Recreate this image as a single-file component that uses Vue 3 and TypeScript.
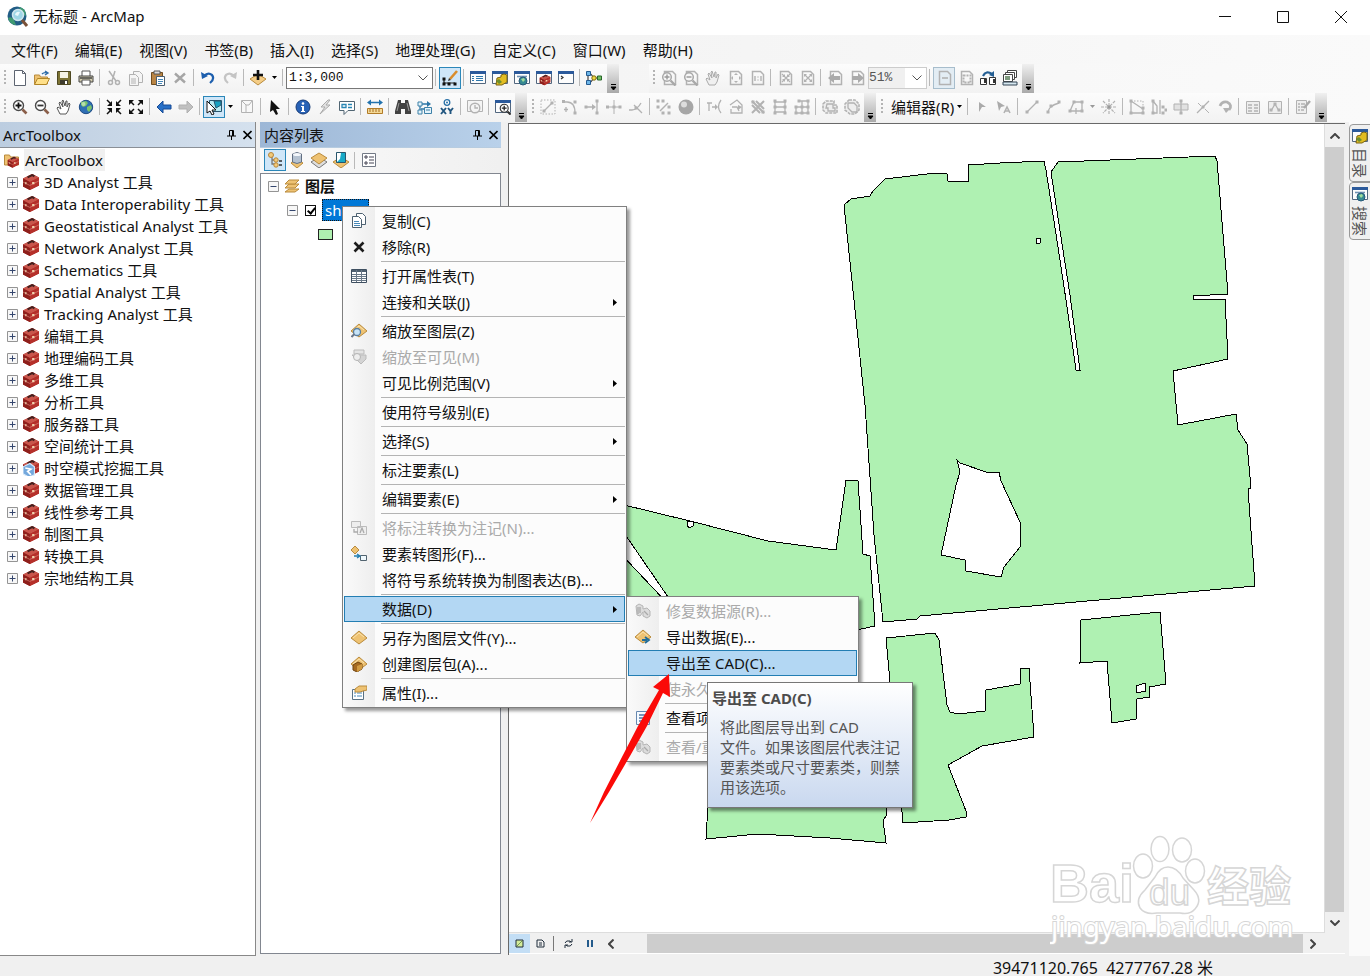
<script setup lang="ts">
import { ref } from 'vue'

interface Tool { i?: string; t?: string; on?: boolean; drop?: boolean; pale?: boolean; combo?: string; label?: string; wide?: boolean }
interface MenuItem { text?: string; icon?: string; sub?: boolean; off?: boolean; hot?: boolean }

const g = '#b2b2b2'
const line = (d: string, c: string = g, w: number = 1.3) => `<path d="${d}" fill="none" stroke="${c}" stroke-width="${w}"/>`
const fill = (d: string, c: string = g, s: string = 'none') => `<path d="${d}" fill="${c}" stroke="${s}"/>`
const nodes = (pts: number[][], c: string = g) => pts.map(p => `<rect x="${p[0] - 1.5}" y="${p[1] - 1.5}" width="3" height="3" fill="${c}"/>`).join('')
const page = line('M3.5 1.5h8l3 3v10h-11z', g, 1.5)
const glass = (c: string, h: string) => `<circle cx="6.5" cy="6.5" r="5" fill="#fff" stroke="${c}" stroke-width="1.4"/>` + line('M10.5 10.5l4 4', h, 2.6)
const pageGlass = page + '<circle cx="6" cy="7" r="4.3" fill="#f6f6f6" stroke="#a8a8a8" stroke-width="1.5"/>' + line('M9.500 10.500l5 5', '#a8a8a8', 2.4)
const windowBox = fill('M.5 1.5h15v12h-15z', '#fdfdfd', '#52677f') + fill('M0 1h16v3H0z', '#2c5a9b')
const gold = (d: string) => fill(d, '#eec272', '#b98b3d')
const diamond = gold('M8 1l8 7-8 6-8-6z') + line('M2 8l6-5 5 4', '#fbe3ae', 1)
const redBox = fill('M1 5l8-4 6 3v7l-8 4-6-3z', '#a8261f') + fill('M1 5l8-4 6 3-8 4z', '#c9554b') + fill('M7 8l8-4v7l-8 4z', '#b5302a') + fill('M1 5l6 3v7l-6-3z', '#8e1f1b') + line('M1 8l6 3 8-4', '#d98579', .6) + line('M5 4l4-2 2 1', '#42201e', 1.8) + fill('M3 8h1v2H3zM9 8h2v2H9z', '#f3d4b0')
const globe = '<circle cx="8" cy="8" r="6.7" fill="#2f6fb4" stroke="#1f4c85"/>' + fill('M3 3l5-1 2 2-2 3-3 1-2-2zM9 8l4-2 1 3-3 4-2-2z', '#7cc36c') + '<circle cx="5.5" cy="5" r="2" fill="#fff" opacity=".45"/>'

const icons: Record<string, string> = {
  new: fill('M2.5.5h8l3 3v12h-11z', '#fff', '#5d6470') + line('M10.5.5v3h3', '#5d6470', 1),
  open: gold('M.5 14V5h5l1 2h7v7z') + fill('M.5 14.500l3-6h12l-3 6z', '#ffe08a', '#b08425') + line('M8 4q2-2 5-1M11 1l3 2-3 2', '#2e6ca8', 1.4),
  save: fill('M1.500 1.500h13v13h-13z', '#7c7334', '#4e4822') + fill('M4 2h8v6H4z', '#f5f3e4') + fill('M4 10h8v4H4z', '#3e3b2d') + fill('M9 11h2v3H9z', '#fff'),
  print: fill('M4 1h8v6H4z', '#fff', '#555') + fill('M1 6h14v6H1z', '#d3cdb0', '#444') + fill('M4 10h8v5H4z', '#fff', '#555') + line('M2 8h12', '#444', 1.5),
  cut: line('M3 1l7 10M9 1L6 11', g, 1.5) + `<circle cx="4.500" cy="12.500" r="2" fill="none" stroke="${g}" stroke-width="1.500"/><circle cx="11.500" cy="12.500" r="2" fill="none" stroke="${g}" stroke-width="1.500"/>`,
  copyOff: fill('M5.500 1.500h6l3 3v8h-9z', '#f5f5f5', g) + fill('M1.500 4.500h6l3 3v8h-9z', '#f5f5f5', g) + line('M3 9h5M3 11h5M3 13h5', g, 1),
  copy: fill('M5.500 .5h6l3 3v8h-9z', '#fff', '#4c6070') + fill('M1.500 3.500h6l3 3v8h-9z', '#fff', '#4c6070') + line('M3 8.500h5M3 10.500h6M3 12.500h6', '#4788b8', 1),
  paste: fill('M1.500 2.500h11v12h-11z', '#b98545', '#6f4d20') + fill('M4 1h6v3H4z', '#ddd', '#555') + fill('M6.500 6.500h8v9h-8z', '#fff', '#4b5f70') + line('M8 9.500h5M8 11.500h5M8 13.500h4', '#4788b8', 1),
  delOff: line('M3 3.500l10 9M13 3.500l-10 9', '#a6a6a6', 2.4),
  del: line('M3.500 3.500l9 9M12.500 3.500l-9 9', '#1c1c1c', 2.6),
  undo: line('M4 6q4-4 8-1 3 4-2 8', '#1d5fae', 2.2) + fill('M1 2l1 7 6-3z', '#1d5fae'),
  redo: line('M12 6q-4-4-8-1-3 4 2 8', '#c4c4c4', 2.2) + fill('M15 2l-1 7-6-3z', '#c4c4c4'),
  addData: fill('M8 4l8 5-8 6-8-6z', '#f4cd87', '#b98b3d') + line('M8 0v10M3 5h10', '#111', 2.6),
  editor: line('M2 9v4h11', '#222', 1.2) + nodes([[2, 14], [7, 14], [13, 14], [2, 9]], '#111') + line('M8 9l7-8', '#d98c2b', 2.6) + fill('M6 11l3-1-2-2z', '#333'),
  toc: windowBox + line('M2 6.500h2M6 6.500h7M2 8.500h2M6 8.500h7M2 10.500h2M6 10.500h7', '#2f78ad', 1),
  catalog: windowBox + fill('M5 8l4-1V5l3-1 3 1v7l-5 3-6 0z', '#e2bd22', '#7a6413') + fill('M4 11l3-2 3 3-3 2z', '#6f8f2d'),
  search: windowBox + line('M3 6.500h10', '#6f91b2', 1.6) + '<circle cx="9" cy="11" r="4" fill="#368a92" stroke="#28597a"/><path d="M7 9l3-1 1 2-2 2z" fill="#a0dd9c"/>',
  toolbox: windowBox + '<g transform="translate(3 4) scale(.75)">' + redBox + '</g>',
  python: windowBox + line('M3 6l2 1.500-2 1.500', '#333', 1.2),
  model: line('M4 3l4 5h5M4 13l4-5M2 3v10', '#333', 1.1) + fill('M.5 1.500h4v4h-4zM.5 10.500h4v4h-4z', '#6db6e9', '#245b91') + '<circle cx="8" cy="8" r="2.200" fill="#f0d53f" stroke="#7c6d13"/>' + fill('M11.500 6h4v4h-4z', '#72bd63', '#28672a'),
  pin: pageGlass + line('M3.500 7h5M6 4.500v5', '#999', 1.4), pout: pageGlass + line('M3.500 7h5', '#999', 1.4),
  zin: glass('#4a4a4a', '#8a5e49') + line('M3.500 6.500h6M6.500 3.500v6', '#111', 1.8), zout: glass('#4a4a4a', '#8a5e49') + line('M3.500 6.500h6', '#333', 1.8),
  hand: fill('M4 15l-3-6 1-1 3 2-2-6 1-1 3 5-1-6 1-1 2 6 1-5 1 0v6l2-4 1 1-2 7-2 3z', '#fff', '#565656'),
  handOff: fill('M4 15l-3-6 1-1 3 2-2-6 1-1 3 5-1-6 1-1 2 6 1-5 1 0v6l2-4 1 1-2 7-2 3z', '#f0f0f0', '#aaa'),
  globe,
  fixedIn: line('M1 1l4 4M15 1l-4 4M1 15l4-4M15 15l-4-4', '#111', 1.5) + fill('M6 2v5H1zM10 2v5h5zM6 14V9H1zM10 14V9h5z', '#111'),
  fixedOut: line('M2 2l4 4M14 2l-4 4M2 14l4-4M14 14l-4-4', '#111', 1.5) + fill('M1 6V1h5zM15 6V1h-5zM1 10v5h5zM15 10v5h-5z', '#111'),
  pageIn: page + line('M5 4l8 8M13 4l-8 8', g, 1.2) + fill('M8 4v3H5zM10 4v3h3zM8 12V9H5zM10 12V9h3z'),
  pageOut: page + line('M6 5l6 6M12 5l-6 6', g, 1.2) + fill('M5 7V4h3zM13 7V4h-3zM5 9v3h3zM13 9v3h-3z'),
  whole: page + fill('M9 3l2 2H7zM9 13l2-2H7zM4 8l2-2v4zM14 8l-2-2v4z'),
  one: page + line('M6 6v5M12 6v5M9 6.500v1M9 9.500v1', g, 1.4),
  left: fill('M1 8l6-6v4h8v4H7v4z', '#2870c7', '#174b96'), right: fill('M15 8L9 2v4H1v4h8v4z', '#c0c0c0', '#b0b0b0'),
  pageLeft: page + fill('M1 8l6-5v3h6v4H7v3z', '#aaa'), pageRight: page + fill('M15 8L9 3v3H3v4h6v3z', '#aaa'),
  selFeat: fill('M3.500 1.500h12v11h-12z', '#b9eaf2', '#29566f') + fill('M8 2h7v4l-5 3z', '#18a2c1', '#29566f') + fill('M1 2l9 9H6l2 4-2 1-2-4-3 2z', '#fff', '#111'),
  clear: fill('M2.500 1.500h11v12h-11z', '#f8f8f8', g) + line('M3 2l4 4h3l3-4M7 6v7', g, 1),
  pointer: fill('M4 1l9 9H9l2 5-2 1-3-5-3 2z', '#111'),
  info: '<circle cx="8" cy="8" r="7" fill="#2862b6" stroke="#173c78"/><circle cx="8" cy="4.500" r="1.300" fill="#fff"/>' + fill('M6 7h3v5h1v1H6v-1h1V8H6z', '#fff'),
  bolt: fill('M11 1L4 8h4l-5 7 10-9H9l4-5z', '#e3e3e3', '#aaa'),
  html: fill('M.5 2.500h15v9H9l-4 4v-4H.5z', '#fff', '#506573') + line('M3 5.500h4v3H3zM9 5.500h4M9 8.500h4', '#2886b4', 1.3),
  measure: line('M2 3.500h12', '#2272ad', 1.5) + fill('M0 3.500l4-3v6zM16 3.500l-4-3v6z', '#2272ad') + fill('M.5 9.500h15v5H.5z', '#f4d997', '#b17b28') + line('M3 10v3M6 10v3M9 10v3M12 10v3', '#a46c20', 1),
  find: fill('M3 1h3v3h4V1h3l3 11v3h-6v-5H6v5H0v-3z', '#414141') + line('M4 4L2 12M12 4l2 8', '#999', 1),
  route: line('M3 13V5h8M4 10h3', '#2b75a6', 1.3) + fill('M10 2l4 3-4 3z', '#2b75a6') + fill('M1 3h4v4H1zM1 11h4v4H1zM7.500 8.500h7v6h-7z', '#e4f3fb', '#3d81a8') + line('M9 11h4', '#3d81a8', 1),
  xy: '<circle cx="8" cy="3.500" r="2.800" fill="#fff" stroke="#2870a6" stroke-width="1.300"/><circle cx="8" cy="3.500" r="1" fill="#2870a6"/>' + line('M2 9l5 6M7 9l-5 6M9 9l2.500 3L14 9M11.500 12v3', '#20557f', 1.9),
  time: fill('M.5 1.500h15v11H.5z', '#f4f4f4', g) + '<circle cx="8" cy="9" r="4.800" fill="#f4f4f4" stroke="#b2b2b2" stroke-width="1.400"/>' + line('M8 6v3h3'),
  viewer: windowBox + '<g transform="translate(4 4) scale(.8)">' + glass('#333', '#333') + line('M3.500 6.500h6M6.500 3.500v6', '#222', 1.6) + '</g>',
  draft: page + line('M6 8h6', g, 1.6), focus: page + `<rect x="5.500" y="5.500" width="7" height="7" fill="none" stroke="${g}" stroke-dasharray="2 1" stroke-width="2"/>`,
  swap: line('M3 6q3-6 9-2', '#245f94', 2.2) + fill('M14 7l0-6-5 4z', '#245f94') + fill('M.5 8.500h6v6h-6zM9.500 7.500h6v7h-6z', '#fff', '#333') + fill('M4 9h2v4H4zM13 9h2v4h-2z', '#333'),
  ddp: fill('M5.500 .5h9v7h-9z', '#fff', '#444') + fill('M3.500 2.500h9v7h-9z', '#fff', '#444') + fill('M1.500 4.500h9v7h-9z', '#fff', '#444') + line('M3 7h5M3 9h5', '#557b55') + fill('M1 12h14v3H1z', '#d6e7ef', '#345'),
  e1: `<rect x="1" y="1" width="14" height="14" fill="none" stroke="${g}" stroke-dasharray="1.500 1.500"/>` + line('M4 12l8-8') + nodes([[4, 12], [12, 4]]),
  e2: line('M1 3h4q8 0 8 11M4 8v5M2 10.500h4') + nodes([[1.500, 2.500], [13, 3], [13, 14]]), e3: line('M1 8h8M13 2v12') + fill('M8 5l4 3-4 3z') + nodes([[2, 8], [13, 2], [13, 14]]),
  e4: line('M1 8h14M8 1v14', g, 1) + nodes([[1.500, 8], [8, 8], [14, 8]]), e5: line('M1 11h3q5 0 9-7M6 6l8 8') + nodes([[8, 9]]),
  e6: line('M4 12l8-8', g, 1.4) + nodes([[2, 2], [7, 2], [2, 8], [13, 8], [7, 14], [13, 14]]),
  ball: '<circle cx="8" cy="8" r="7.500" fill="#a6a6a6"/><circle cx="6" cy="5.500" r="3" fill="#ddd"/>',
  e7: line('M1 4h5M3 4v8M6 8h5M15 1q-5 7 0 13') + fill('M9 5l3 3-3 3z'), e8: line('M2 6l7-5 5 5v8H3v-4M4 8h5l2 4') + fill('M10 6l4 2-4 3z'),
  e9: line('M2 2l12 12M14 2L2 14M2 6l8 8M6 2l8 8', g, 2) + nodes([[3, 3], [13, 13]]), e10: line('M2 3h12M2 8h12M2 13h12M3 2v12M13 2v12') + nodes([[3, 2], [13, 2], [3, 8], [13, 8], [3, 14], [13, 14]]),
  e11: line('M5 2h9v12H2V8h12M8 2v12') + nodes([[5, 2], [14, 2], [2, 8], [8, 8], [14, 8], [2, 14], [8, 14], [14, 14]]),
  u1: `<path d="M1 5l3-3h8v4h3v8H4l-3-3z" fill="#eee" stroke="${g}" stroke-width="1.600" stroke-dasharray="3 1"/>` + line('M5 5h6v4h2v3H6V9H4z'), u2: `<path d="M5 1h6l4 4v6l-4 4H6l-5-4V5z" fill="#eee" stroke="${g}" stroke-width="1.600" stroke-dasharray="3 1"/>` + line('M4 4h6l3 3v6H8L4 9z'),
  edit: fill('M5 3l7 5-4 0-3 5z', '#aaa'), editA: fill('M1 2l8 5-4 1-2 4z', '#aaa') + line('M8 14l3-6 3 6M9 12h4', g, 1.6),
  s1: line('M3 13L13 3') + nodes([[3, 13], [13, 3]]), s2: line('M2 14q0-7 11-10') + nodes([[2, 13], [5, 7], [13, 3]]), s3: line('M2 12l4-9h8v9h-3M2 12h3M8 9v6M5 12h6') + nodes([[6, 3], [14, 3], [14, 12], [2, 12]]),
  s4: `<path d="M8 0v16M0 8h16M2 2l12 12M14 2L2 14" fill="none" stroke="${g}" stroke-width="1.200" stroke-dasharray="3 1"/>` + nodes([[8, 8]], '#999'),
  s5: line('M2 2v12h12v-4L2 2') + nodes([[2, 2], [2, 14], [14, 14], [14, 9]]) + `<path d="M5 2h9v5" fill="none" stroke="${g}" stroke-dasharray="1.500 1.500"/>`, s6: line('M2 2v12h4V7L2 2M9 1v14') + nodes([[2, 2], [2, 14], [12, 8], [12, 14], [15, 11]]),
  s7: fill('M1 5h14v6H1z', '#e1e1e1', g) + line('M8 1v14') + nodes([[8, 2], [8, 14]]), s8: line('M2 14L14 2') + line('M3 4l3 3M10 10l4 4', g, 1) + nodes([[8, 8]]),
  s9: line('M3 7q2-5 7-4 6 3 2 8', g, 2.8) + fill('M6 9h8l-5 5z'), attr: fill('M1.500 2.500h13v12h-13z', '#eee', g) + line('M3 6h4M9 6h4M3 9h4M9 9h4M3 12h4M9 12h4'), sketch: fill('M1.500 2.500h13v12h-13z', '#eee', g) + line('M4 12l4-7 4 7') + nodes([[4, 11], [8, 5], [12, 11]]),
  create: fill('M1.500 1.500h10v13h-10z', '#eee', g) + line('M3 5h2M6 5h4M3 8h2M6 8h3M3 11h2M6 11h3') + line('M9 9l6-7', '#aaa', 2.4),
  box: redBox,
  boxBlue: redBox + fill('M1 7l6-3 4 3v7l-5 2-5-3z', '#74a8dc', '#d7e9fa') + line('M3 8l5 1-3 2 3 3', '#fff', 1.4),
  boxFolder: gold('M.5 13V3h5l1 2h8v8z') + '<g transform="translate(3 4) scale(.78)">' + redBox + '</g>',
  layers: gold('M1 14l4-3h10l-4 3H1z') + gold('M1 10l4-4h10l-4 4H1z') + gold('M1 6l4-4h10l-4 4H1z'),
  list1: line('M5 4v8h5M5 8h4', '#777') + '<circle cx="4" cy="3" r="2.500" fill="#f2ca7a" stroke="#b8863b"/><circle cx="9" cy="8" r="2.200" fill="#f2ca7a" stroke="#b8863b"/><circle cx="9" cy="13" r="2.200" fill="#f2ca7a" stroke="#b8863b"/>' + line('M12 9h3M12 13h3', '#333'),
  list2: gold('M8 7l6 4-6 5-6-5z') + fill('M3.500 2v8q4.500 3 9 0V2q-4.500-3-9 0z', '#b5c2d1', '#626f82') + '<ellipse cx="8" cy="2.500" rx="4" ry="1.500" fill="#f4f7fb"/>',
  list3: fill('M0 10l8-5 8 5-8 6z', '#ddd', '#777') + gold('M0 6l8-5 8 5-8 6z'), list4: gold('M0 10l8-5 8 5-8 6z') + fill('M3.500 .5h9v10h-9z', '#17a9c7', '#28566d') + fill('M4 1h4L7 7l-3 3z', '#fff'),
  opts: fill('M1.500 1.500h13v13h-13z', '#fff', '#727985') + line('M4 4h2v2H4zM4 10h2v2H4zM8 5h5M8 8h5M8 11h5', '#445', 1),
  table: fill('M.5 1.500h15v13h-15z', '#fff', '#3e4f60') + line('M1 3h14', '#4f6070', 2) + line('M1 6.500h14M1 8.500h14M1 10.500h14M1 12.500h14M5.500 2v12M10.500 2v12', '#6a7988', 1),
  zlayer: diamond + '<circle cx="6" cy="9" r="3.500" fill="#c8e4f7" stroke="#587ea0" stroke-width="1.300"/>' + line('M3.500 11l-3 3', '#6c788a', 2),
  zvis: fill('M3 1h10v4H3z', '#e4e4e4', '#bbb') + fill('M1 6h14v4l-5 5-3-3z', '#d4d4d4', '#bbb') + '<circle cx="6" cy="8" r="3.500" fill="#eee" stroke="#b4b4b4"/>',
  label: fill('M.5 1.500h9v6h-9zM6.500 6.500h9v8h-9z', '#eee', '#bbb') + line('M3 9v3h4M9 13l2-5 2 5', '#aaa'),
  graphic: gold('M4 0l4 4-4 4-4-4z') + fill('M9.500 9.500h6v5h-6z', '#eef8fd', '#51636f') + line('M3 10h5M6 8l3 2-3 2', '#2580b2'),
  diamond,
  pack: diamond + fill('M2 9l5-3 4 2v5l-5 3-4-2z', '#a66a20', '#704511') + fill('M6 10l5-2v5l-5 3z', '#d29b42'),
  props: fill('M1.500 4.500h11v10h-11z', '#fff', '#587184') + line('M3 8h2M6 8h5M3 11h2M6 11h5', '#4788b8', 1) + gold('M4 4l4-3h8v4l-4 1-3 1H4z'),
  repair: fill('M1 3l3-2 4 2v3l4-1 3 3v5l-3 2-4-2V9L5 13 2 12z', '#dcdcdc', '#b5b5b5') + line('M3 4v7M5 4v6M9 8l4 4', '#aaa'),
  export: diamond + line('M7 11h5M10 8l4 3-4 3', '#216c98', 1.8),
  item: fill('M1.500 1.500h13v13h-13z', '#f5faff', '#6688b0') + line('M4 5h8M4 8h8M4 11h5', '#4f76a5'),
}

const sep: Tool = {}
const row1a: Tool[] = [{ i: 'new', t: '新建' }, { i: 'open', t: '打开' }, { i: 'save', t: '保存' }, { i: 'print', t: '打印' }, sep, { i: 'cut', t: '剪切' }, { i: 'copyOff', t: '复制' }, { i: 'paste', t: '粘贴' }, { i: 'delOff', t: '删除' }, sep, { i: 'undo', t: '撤消' }, { i: 'redo', t: '恢复' }, sep, { i: 'addData', t: '添加数据', drop: true }, sep, { combo: '1:3,000', t: '地图比例', wide: true }, sep, { i: 'editor', t: '编辑器工具条', on: true }, sep, { i: 'toc', t: '内容列表' }, { i: 'catalog', t: '目录' }, { i: 'search', t: '搜索' }, { i: 'toolbox', t: 'ArcToolbox' }, { i: 'python', t: 'Python' }, sep, { i: 'model', t: '模型构建器' }]
const row1b: Tool[] = [{ i: 'pin', t: '放大' }, { i: 'pout', t: '缩小' }, { i: 'handOff', t: '平移' }, { i: 'whole', t: '缩放整个页面' }, { i: 'one', t: '缩放至100%' }, sep, { i: 'pageIn', t: '固定比例放大' }, { i: 'pageOut', t: '固定比例缩小' }, sep, { i: 'pageLeft', t: '返回' }, { i: 'pageRight', t: '前进' }, { combo: '51%', t: '页面比例' }, sep, { i: 'draft', t: '草图模式', on: true, pale: true }, { i: 'focus', t: '聚焦数据框' }, { i: 'swap', t: '更改布局' }, { i: 'ddp', t: '数据驱动页面' }]
const row2a: Tool[] = [{ i: 'zin', t: '放大' }, { i: 'zout', t: '缩小' }, { i: 'hand', t: '平移' }, { i: 'globe', t: '全图' }, sep, { i: 'fixedIn', t: '固定比例放大' }, { i: 'fixedOut', t: '固定比例缩小' }, sep, { i: 'left', t: '返回' }, { i: 'right', t: '前进' }, sep, { i: 'selFeat', t: '选择要素', on: true, drop: true }, { i: 'clear', t: '清除' }, sep, { i: 'pointer', t: '选择元素' }, sep, { i: 'info', t: '识别' }, { i: 'bolt', t: '超链接' }, { i: 'html', t: 'HTML' }, sep, { i: 'measure', t: '测量' }, sep, { i: 'find', t: '查找' }, { i: 'route', t: '查找路径' }, { i: 'xy', t: '转到XY' }, sep, { i: 'time', t: '时间' }, sep, { i: 'viewer', t: '查看器' }]
const mk = (s: string): Tool[] => s.split(' ').map(n => (n === '|' ? sep : { i: n, t: n }))
const row2b = mk('e1 e2 e3 e4 e5 | e6 ball | e7 e8 e9 e10 e11 | u1 u2')
const row2c: Tool[] = [{ label: '编辑器(R)', t: '编辑器' }, sep, ...mk('edit editA | s1 s2'), { i: 's3', t: '构造', drop: true, pale: true }, ...mk('s4 | s5 s6 s7 s8 s9 | attr sketch | create')]
const rows = [
  [{ id: 'standard', tools: row1a }, { id: 'layout', tools: row1b }],
  [{ id: 'tools', tools: row2a }, { id: 'topology', tools: row2b }, { id: 'edit', tools: row2c }],
]

const menus = ['文件(F)', '编辑(E)', '视图(V)', '书签(B)', '插入(I)', '选择(S)', '地理处理(G)', '自定义(C)', '窗口(W)', '帮助(H)']
const boxes = ['3D Analyst 工具', 'Data Interoperability 工具', 'Geostatistical Analyst 工具', 'Network Analyst 工具', 'Schematics 工具', 'Spatial Analyst 工具', 'Tracking Analyst 工具', '编辑工具', '地理编码工具', '多维工具', '分析工具', '服务器工具', '空间统计工具', '时空模式挖掘工具', '数据管理工具', '线性参考工具', '制图工具', '转换工具', '宗地结构工具']
const ctx: MenuItem[] = [{ text: '复制(C)', icon: 'copy' }, { text: '移除(R)', icon: 'del' }, {}, { text: '打开属性表(T)', icon: 'table' }, { text: '连接和关联(J)', sub: true }, {}, { text: '缩放至图层(Z)', icon: 'zlayer' }, { text: '缩放至可见(M)', icon: 'zvis', off: true }, { text: '可见比例范围(V)', sub: true }, {}, { text: '使用符号级别(E)' }, {}, { text: '选择(S)', sub: true }, {}, { text: '标注要素(L)' }, {}, { text: '编辑要素(E)', sub: true }, {}, { text: '将标注转换为注记(N)...', icon: 'label', off: true }, { text: '要素转图形(F)...', icon: 'graphic' }, { text: '将符号系统转换为制图表达(B)...' }, {}, { text: '数据(D)', sub: true, hot: true }, {}, { text: '另存为图层文件(Y)...', icon: 'diamond' }, { text: '创建图层包(A)...', icon: 'pack' }, {}, { text: '属性(I)...', icon: 'props' }]
const sub: MenuItem[] = [{ text: '修复数据源(R)...', icon: 'repair', off: true }, { text: '导出数据(E)...', icon: 'export' }, { text: '导出至 CAD(C)...', hot: true }, { text: '使永久', off: true }, {}, { text: '查看项', icon: 'item' }, {}, { text: '查看/重', icon: 'repair', off: true }]
const popups = [{ id: 'layer-menu', items: ctx }, { id: 'data-menu', items: sub }]
const visible = ref(true)
</script>

<template>
  <div class="app">
    <header class="title">
      <svg class="logo" viewBox="0 0 22 22">
        <circle cx="10" cy="10" r="9.500" fill="#225d86" />
        <path d="M1 12q4-2 6 2l2 5q-6 0-8-7zM12 1q7 1 7 9l-4-2z" fill="#3f9a72" />
        <circle cx="11" cy="9" r="5.500" fill="#9fd6e6" stroke="#cfe6ee" stroke-width="1.500" />
        <path d="M8 9q1-4 5-3l-2 4z" fill="#e8f8fb" />
        <path d="M15 14l5 6" stroke="#7a5138" stroke-width="3" />
      </svg>
      <h1>无标题 - ArcMap</h1>
      <button aria-label="最小化"><svg viewBox="0 0 12 12"><path d="M0 5.500h12" /></svg></button>
      <button aria-label="最大化"><svg viewBox="0 0 12 12"><path d="M.5 .5h11v11H.5z" /></svg></button>
      <button aria-label="关闭"><svg viewBox="0 0 12 12"><path d="M0 0l12 12M12 0L0 12" /></svg></button>
    </header>
    <nav class="menubar"><button v-for="m in menus" :key="m">{{ m }}</button></nav>

    <div v-for="(row, r) in rows" :key="r" class="toolrow">
      <div v-for="bar in row" :key="bar.id" class="bar" :class="bar.id">
        <i class="grip"></i>
        <template v-for="(t, k) in bar.tools" :key="k">
          <button v-if="t.i" class="tool" :class="{ on: t.on, pale: t.pale }" :aria-label="t.t"><svg viewBox="0 0 16 16" v-html="icons[t.i]"></svg></button>
          <button v-else-if="t.label" class="editlabel">{{ t.label }}</button>
          <label v-else-if="t.combo" class="combo" :class="{ wide: t.wide }">
            <select :aria-label="t.t" :disabled="!t.wide"><option>{{ t.combo }}</option></select>
            <svg viewBox="0 0 10 6"><path d="M.5 .5L5 5 9.500 .5" /></svg>
          </label>
          <i v-else class="sep"></i>
          <button v-if="t.drop || t.label" class="drop" :class="{ pale: t.pale }" aria-label="更多"><svg viewBox="0 0 5 3"><path d="M0 0h5L2.500 3z" /></svg></button>
        </template>
        <button class="cap" aria-label="工具条选项"><svg viewBox="0 0 7 7"><path d="M1 .5h5M1 3h5L3.500 6z" /></svg></button>
      </div>
    </div>

    <main class="work">
      <aside class="dock toolboxes">
        <div class="head"><h2>ArcToolbox</h2>
          <button aria-label="固定"><svg viewBox="0 0 9 10"><path d="M2.500 6V.5h4V6M5.500 1v5M0 6h9M4.500 6v4" /></svg></button>
          <button aria-label="关闭"><svg viewBox="0 0 9 10"><path d="M.5 1l8 8M8.500 1l-8 8" class="thick" /></svg></button>
        </div>
        <ul class="tree">
          <li class="root"><svg class="ic" viewBox="0 0 16 16" v-html="icons.boxFolder"></svg><span>ArcToolbox</span></li>
          <li v-for="b in boxes" :key="b">
            <button class="exp" :aria-label="'展开 ' + b"><svg viewBox="0 0 11 11"><path d="M.5 .5h10v10H.5z" class="frame" /><path d="M2.500 5.500h6M5.500 2.500v6" /></svg></button>
            <svg class="ic" viewBox="1 1 14 14" v-html="b.startsWith('时空') ? icons.boxBlue : icons.box"></svg><span>{{ b }}</span>
          </li>
        </ul>
      </aside>

      <aside class="dock contents">
        <div class="head"><h2>内容列表</h2>
          <button aria-label="固定"><svg viewBox="0 0 9 10"><path d="M2.500 6V.5h4V6M5.500 1v5M0 6h9M4.500 6v4" /></svg></button>
          <button aria-label="关闭"><svg viewBox="0 0 9 10"><path d="M.5 1l8 8M8.500 1l-8 8" class="thick" /></svg></button>
        </div>
        <div class="listbar">
          <button v-for="n in 4" :key="n" class="tool" :class="{ on: n === 1 }" :aria-label="'列表方式 ' + n"><svg viewBox="0 0 16 16" v-html="icons['list' + n]"></svg></button>
          <i class="sep"></i>
          <button class="tool" aria-label="选项"><svg viewBox="0 0 16 16" v-html="icons.opts"></svg></button>
        </div>
        <ul class="toc">
          <li class="frame-row">
            <button class="exp" aria-label="折叠图层"><svg viewBox="0 0 11 11"><path d="M.5 .5h10v10H.5z" class="frame" /><path d="M2.500 5.500h6" /></svg></button>
            <svg class="ic" viewBox="0 0 16 16" v-html="icons.layers"></svg><b>图层</b>
          </li>
          <li class="layer-row">
            <button class="exp" aria-label="折叠"><svg viewBox="0 0 11 11"><path d="M.5 .5h10v10H.5z" class="frame" /><path d="M2.500 5.500h6" /></svg></button>
            <input id="layer-on" v-model="visible" type="checkbox"><label for="layer-on">sha</label>
          </li>
          <li class="symbol-row"><i></i></li>
        </ul>
      </aside>

      <section class="view">
        <div class="canvas">
          <svg class="map" role="img" aria-label="地图">
            <g transform="translate(-509 -124)">
              <path d="M844 205L851 199 870 196 873 191 885 179 935 173 947 174 948 181 968 181 968 165 1000 163 1044 161 1046 170 1058 247 1066 300 1076 370 1080 370 1070 295 1063 250 1051 172 1058 162 1215 156 1217 161 1228 294 1193 296 1193 299 1225 299 1228 359 1173 371 1178 425 1236 414 1238 430 1247 444 1251 488 1248 489 1255 586 920 616 917 619 883 622 874 535 865 405zM957 460l3 3 26 9h13l2 9 19 41v25l-16 20-3 10-35-6-1-11-24-5 15-70 4-13zM1036 238h4l1 3-1 2h-4z" />
              <path d="M620 504L690 521 768 541 836 550 846 480 858 481 863 554 870 556 875 626 861 629 690 629 620 527zM688 521l5 1v4l-4 2-2-3z" />
              <path d="M620 553l65 69-65 40z" />
              <path d="M886 638l49-5 4 7 8 65 3 7 8 2 27-3 1-21 34-6 1-16h8l5 69-52 9-34 19 18 46v6l-17 3-46 3z" />
              <path d="M710 770l-4 69 52-5 72 4 56 5-3-23 4-5-3-45z" />
              <path d="M1081 620l79-8 6 72-17 3 1 10-13 2-1 20-24 4-5-62-27 2zM1136 686l9-3 1 8-10 2z" />
            </g>
          </svg>
        </div>
        <div class="vscroll">
          <button aria-label="向上"><svg viewBox="0 0 10 6"><path d="M.5 5.500L5 1l4.500 4.500" /></svg></button>
          <i></i>
          <button aria-label="向下"><svg viewBox="0 0 10 6"><path d="M.5 .5L5 5 9.500 .5" /></svg></button>
        </div>
        <div class="hscroll">
          <button class="data-view" aria-label="数据视图"><svg viewBox="0 0 9 9"><path d="M1 1h7v7H1z" fill="#d4ec9a" /><path d="M2 7l5-5" stroke="#759b55" /></svg></button>
          <button aria-label="布局视图"><svg viewBox="0 0 9 9"><path d="M1 1h5l2 2v5H1zM3 4h3M3 6h3" /></svg></button>
          <i class="div"></i>
          <button aria-label="刷新"><svg viewBox="0 0 9 9"><path d="M1 4q1-3 5-2l1 1M8 5q-1 3-5 2L2 6M8 0v3H5M1 9V6h3" /></svg></button>
          <button aria-label="暂停"><svg viewBox="0 0 9 9"><path d="M3 1v7M7 1v7" stroke="#245b8c" stroke-width="2" /></svg></button>
          <button class="arrow" aria-label="向左"><svg viewBox="0 0 6 10"><path d="M5.500 .5L1 5l4.500 4.500" /></svg></button>
          <i class="thumb"></i>
          <button class="arrow" aria-label="向右"><svg viewBox="0 0 6 10"><path d="M.5 .5L5 5 .5 9.500" /></svg></button>
        </div>
      </section>

      <div class="sidetabs">
        <button><svg class="ic" viewBox="0 0 16 16" v-html="icons.catalog"></svg><span>目录</span></button>
        <button><svg class="ic" viewBox="0 0 16 16" v-html="icons.search"></svg><span>搜索</span></button>
      </div>
    </main>

    <footer class="status"><span>39471120.765&nbsp; 4277767.28 米</span><i></i></footer>

    <svg class="watermark" viewBox="0 0 250 120" aria-hidden="true">
      <text x="0" y="76" class="bai">Bai</text>
      <ellipse cx="93" cy="40" rx="9.500" ry="12" /><ellipse cx="110" cy="23" rx="9" ry="12.500" /><ellipse cx="132" cy="24" rx="9.500" ry="12" /><ellipse cx="145" cy="45" rx="9.500" ry="12" />
      <path d="M118 41q9 0 15 11l11 12q9 10 1 19-5 6-15 4h-23q-12 2-17-5-5-9 5-18l10-13q5-10 13-10z" />
      <text x="99" y="79" class="du">du</text>
      <text x="157" y="76" class="jy">经验</text>
      <text x="1" y="111" class="url">jingyan.baidu.com</text>
    </svg>

    <div v-for="p in popups" :key="p.id" class="popup" :class="p.id" role="menu">
      <template v-for="(m, k) in p.items" :key="k">
        <button v-if="m.text" role="menuitem" :class="{ hot: m.hot }" :disabled="m.off">
          <svg class="ic" viewBox="0 0 16 16" v-html="m.icon ? icons[m.icon] : ''"></svg><span>{{ m.text }}</span>
          <svg v-if="m.sub" class="more" viewBox="0 0 4 7"><path d="M0 0v7l4-3.500z" /></svg>
        </button>
        <hr v-else>
      </template>
    </div>
    <div class="tip" role="tooltip">
      <strong>导出至 CAD(C)</strong>
      <p>将此图层导出到 CAD<br>文件。如果该图层代表注记<br>要素类或尺寸要素类，则禁<br>用该选项。</p>
    </div>
    <svg class="pointer" viewBox="0 0 84 152" aria-hidden="true"><path d="M80 2L64 15l6 3L49 54 34 83 15 120 1 151 20 120 41 84 58 54 74 21 81 25z" /></svg>
  </div>
</template>

<style>
html, body { margin: 0; background: #f0f0f0; }
</style>

<style scoped>
.app { position: relative; display: flex; flex-direction: column; min-height: 100vh; overflow: hidden; background: #f0f0f0; color: #111; font: 15px/22px "Noto Sans", "Noto Sans CJK SC", sans-serif; }
.app * { box-sizing: border-box; }
button { display: flex; align-items: center; justify-content: center; padding: 0; border: 0; background: none; color: inherit; font: inherit; white-space: nowrap; }
svg { display: block; flex: none; }
h1, h2, p, ul { margin: 0; padding: 0; font: inherit; list-style: none; }
.ic { width: 16px; height: 16px; }

.title { display: flex; align-items: center; height: 35px; padding: 0 0 2px 7px; background: #fff; }
.logo { width: 22px; height: 22px; margin-right: 4px; }
.title h1 { flex: 1; padding-bottom: 2px; }
.title button { width: 58px; height: 32px; }
.title button svg { width: 12px; height: 12px; fill: none; stroke: #111; }
.menubar { display: flex; align-items: center; gap: 17px; height: 29px; padding-left: 11px; background: linear-gradient(90deg, #efefef, #fafafa); }

.toolrow { display: flex; height: 29px; background: linear-gradient(90deg, #f1f1f1, #fafafa); }
.bar { display: flex; align-items: center; padding: 0 0 2px 4px; background: linear-gradient(#fcfcfc, #f2f2f2); }
.bar.standard, .bar.tools { padding-left: 4px; }
.bar.layout { margin-left: 30px; }
.bar.topology, .bar.edit { padding-left: 5px; }
.grip { width: 2px; height: 15px; margin-right: 3px; background: repeating-linear-gradient(#b4b4b4 0 2px, transparent 2px 4px); }
.tool { flex: none; width: 22px; height: 22px; }
.tool svg { width: 16px; height: 16px; }
.tool.on { border: 1px solid #2b87b9; background: #cfe6f8; }
.tool.pale.on { border-color: #a7bdcc; background: #e3edf4; }
.sep { flex: none; width: 6px; height: 17px; background: linear-gradient(#b9b9b9, #b9b9b9) 2px 0 / 1px 100% no-repeat; }
.drop { width: 11px; height: 22px; }
.drop svg { width: 5px; height: 3px; }
.drop.pale svg { fill: #999; }
.cap { align-self: stretch; align-items: flex-end; width: 12px; margin: 0 0 -2px 1px; padding-bottom: 2px; background: linear-gradient(#f0f0f0, #a9a9a9); }
.cap svg { width: 7px; height: 7px; stroke: #000; }
.standard .cap { margin-left: 2px; }
.editlabel { padding-left: 5px; }
.combo { position: relative; display: flex; align-items: center; width: 59px; height: 22px; border: 1px solid #ccc; background: #fff; }
.combo.wide { width: 147px; border-color: #777; }
.combo select { width: 100%; height: 20px; padding: 0 2px; border: 0; background: none; color: #111; font: 13px/20px "Liberation Mono", monospace; appearance: none; opacity: 1; }
.combo select:disabled { width: 36px; padding: 0; background: #f0f0f0; color: #555; }
.combo svg { position: absolute; right: 4px; width: 10px; height: 6px; fill: none; stroke: #555; }

.work { display: flex; flex: 1; min-height: 700px; }
.dock { display: flex; flex: none; flex-direction: column; }
.toolboxes { width: 256px; margin-right: 4px; background: #fff; border: solid #888; border-width: 0 1px 1px 0; }
.contents { width: 241px; margin-bottom: 2px; }
.head { display: flex; align-items: center; height: 26px; padding-left: 3px; border-bottom: 1px solid #8a8f96; background: linear-gradient(90deg, #bccde0, #d5e1ee); }
.contents .head { border-bottom-color: #b7cce0; background: linear-gradient(90deg, #9db7d6, #b9d1ea); }
.head h2 { flex: 1; }
.contents h2 { padding-left: 1px; }
.head button { width: 16px; height: 20px; }
.head button svg { width: 9px; height: 10px; fill: none; stroke: #000; }
.head .thick { stroke-width: 1.6; }
.tree { padding-top: 1px; }
.tree li { display: flex; align-items: center; height: 22px; padding-left: 7px; }
.tree .root { padding-left: 4px; }
.root span { margin-left: 4px; padding: 0 2px 0 1px; background: #f0f0f0; }
.exp, .exp svg { width: 11px; height: 11px; }
.exp svg { fill: none; stroke: #34466e; }
.exp .frame { fill: #f7f7f7; stroke: #949494; }
.tree .exp { margin-right: 5px; }
.tree li:not(.root) span { margin-left: 5px; }
.listbar { display: flex; align-items: center; height: 25px; padding: 0 0 1px 4px; background: linear-gradient(90deg, #fafafa, #f0f0f0); }
.toc { flex: 1; border: 1px solid #828790; background: #fff; }
.toc li { display: flex; align-items: center; height: 24px; padding-left: 7px; }
.toc .ic { margin: 0 5px; }
.toc .layer-row { padding-left: 26px; }
.layer-row input { position: relative; width: 11px; height: 11px; margin: 0 6px 0 7px; border: 1px solid #111; background: #fff; appearance: none; }
.layer-row input:checked::after { content: ""; position: absolute; left: 3px; top: 0; width: 3px; height: 6px; border: solid #000; border-width: 0 2px 2px 0; transform: rotate(40deg); }
.layer-row label { width: 47px; height: 22px; padding-left: 2px; border: 1px dotted #111; background: #0078d7; color: #fff; line-height: 20px; }
.toc .symbol-row { padding-left: 57px; }
.symbol-row i { width: 15px; height: 11px; border: 1px solid #222; background: #aff0b0; }

.view { display: grid; flex: 1; grid-template: 1fr 22px / 1fr 20px; min-width: 0; margin: 1px 4px 1px 7px; border: solid #696969; border-width: 1px 0 0 1px; }
.canvas { position: relative; overflow: hidden; background: #fff; border: solid #ddd; border-width: 0 1px 1px 0; }
.map { position: absolute; inset: 0; width: 100%; height: 100%; fill: #aff1b2; fill-rule: evenodd; stroke: #000; shape-rendering: crispEdges; }
.vscroll { display: flex; flex-direction: column; width: 19px; }
.vscroll button { height: 23px; }
.vscroll button:last-child { height: 21px; }
.vscroll i { flex: 1; background: #cdcdcd; }
.vscroll svg, .arrow svg { fill: none; stroke: #444; stroke-width: 2; }
.vscroll svg { width: 10px; height: 6px; }
.hscroll { grid-column: 1 / 3; display: flex; align-items: center; height: 20px; margin-top: 1px; border-bottom: 1px solid #fff; }
.hscroll button { width: 21px; height: 19px; }
.hscroll .data-view { background: #c3def5; }
.hscroll svg { width: 9px; height: 9px; fill: none; stroke: #1f2c3b; }
.div { width: 1px; height: 15px; margin: 0 4px 0 2px; background: #777; }
.hscroll .arrow svg { width: 6px; height: 10px; stroke: #444; }
.thumb { flex: 1; height: 19px; margin-left: 26px; background: #cdcdcd; }
.hscroll .arrow:last-child { width: 20px; margin-right: 22px; }
.sidetabs { flex: none; width: 21px; padding-top: 2px; background: #fafafa; }
.sidetabs button { flex-direction: column; gap: 4px; width: 22px; height: 58px; border: 1px solid #999; border-radius: 4px 0 0 4px; background: #f0f0f0; color: #555; }
.sidetabs span { writing-mode: vertical-rl; text-orientation: sideways; line-height: 20px; }
.status { display: flex; align-items: flex-end; justify-content: flex-end; height: 20px; font-size: 16px; line-height: 16px; }
.status i { width: 157px; }

.popup { position: absolute; left: 342px; top: 206px; width: 285px; padding: 1px; border: 1px solid #808080; background: linear-gradient(90deg, #fafafa, #eee 32px, #fcfcfc 32px); box-shadow: 3px 3px 3px rgba(0, 0, 0, .4); }
.popup.data-menu { left: 626px; top: 596px; width: 233px; }
.popup button { width: 100%; height: 26px; padding: 0 7px 0 6px; border: 1px solid transparent; }
.popup button span { flex: 1; margin-left: 15px; text-align: left; }
.popup button.hot { border-color: #237eb3; background: #b3d7f3; }
.popup button:disabled { color: #aaa; }
.popup hr { height: 1px; margin: 1px 0 1px 37px; border: 0; background: #b4b4b4; }
.more { width: 4px; height: 7px; }
.tip { position: absolute; left: 707px; top: 682px; width: 206px; height: 126px; padding: 4px; border: 1px solid #777; background: linear-gradient(#fff, #c9d8ef); box-shadow: 3px 3px 3px rgba(0, 0, 0, .45); color: #555; }
.tip strong { display: block; color: #4c4c4c; }
.tip p { padding: 8px 0 0 8px; line-height: 20px; white-space: nowrap; }
.pointer { position: absolute; left: 589px; top: 672px; width: 84px; height: 152px; fill: #fb0a08; }
.watermark { position: absolute; right: 70px; bottom: 30px; width: 250px; height: 120px; fill: #fff; stroke: #d6d6d6; stroke-width: 1.5; }
.bai { font: bold 54px "Liberation Sans", sans-serif; }
.du { font: 37px "Liberation Sans", sans-serif; }
.jy { font: bold 42px "Noto Sans CJK SC", sans-serif; }
.url { font: 28px "Noto Sans", sans-serif; stroke-width: 2; paint-order: stroke; }
</style>
